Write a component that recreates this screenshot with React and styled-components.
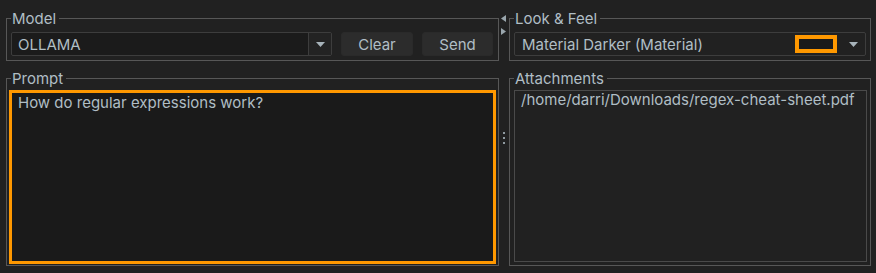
import React from 'react';
import styled, { createGlobalStyle } from 'styled-components';

const Global = createGlobalStyle`
  html, body { margin: 0; padding: 0; background: #212121; }
  body {
    font-family: Inter, "Noto Sans", sans-serif;
    font-size: 15px;
    color: #b0bec5;
  }
  * { box-sizing: border-box; }
`;

const Page = styled.div`
  width: 876px;
  height: 273px;
  padding: 10px 6px 7px 6px;
  display: flex;
`;

const Pane = styled.div`
  width: ${(p) => p.$w}px;
  flex: none;
  display: flex;
  flex-direction: column;
  gap: 9px;
`;

const Group = styled.fieldset`
  margin: 0;
  min-width: 0;
  border: 1px solid #575757;
  padding: ${(p) => p.$pad};
  display: flex;
  flex-direction: ${(p) => (p.$column ? 'column' : 'row')};
  align-items: stretch;
  gap: 9px;
  flex: ${(p) => (p.$grow ? '1 1 auto' : 'none')};
`;

const Legend = styled.legend`
  padding: 0 3px 0 1px;
  margin-left: ${(p) => p.$offset || 0}px;
  line-height: 17px;
  color: #b0bec5;
`;

const Combo = styled.div`
  height: 24px;
  flex: 1 1 auto;
  display: flex;
  align-items: center;
  border: 1px solid #3d3d3d;
  border-radius: 2px;
  background: ${(p) => (p.$editable ? '#1b1b1b' : '#212121')};
  overflow: hidden;
`;

const ComboText = styled.div`
  flex: 1 1 auto;
  padding-left: ${(p) => p.$pad}px;
  white-space: nowrap;
`;

const ArrowBox = styled.div`
  width: 23px;
  align-self: stretch;
  display: flex;
  align-items: center;
  justify-content: center;
  background: ${(p) => (p.$sep ? '#232323' : 'transparent')};
  border-left: ${(p) => (p.$sep ? '1px solid #3d3d3d' : 'none')};
`;

const Caret = () => (
  <svg width="9" height="5" viewBox="0 0 9 5">
    <path d="M0 0 H9 L4.5 5 Z" fill="#a7b3ba" />
  </svg>
);

const Button = styled.button`
  width: ${(p) => p.$w}px;
  height: 24px;
  flex: none;
  font: inherit;
  color: #b0bec5;
  background: #2c2c2c;
  border: 1px solid #2a2a2a;
  border-radius: 3px;
  padding: 0;
`;

const Swatch = styled.span`
  width: 42px;
  height: 18px;
  flex: none;
  border: 4px solid #ff9800;
  background: #1a1a1a;
  margin-right: 5px;
`;

const TextArea = styled.textarea`
  flex: 1 1 auto;
  width: 100%;
  resize: none;
  outline: none;
  border: 3px solid #ff9800;
  background: #1a1a1a;
  color: #b0bec5;
  font: inherit;
  line-height: 18px;
  padding: 1px 6px;
  margin: 0;
`;

const List = styled.div`
  flex: 1 1 auto;
  border: 1px solid #4a4a4a;
  padding: 0 6px;
  line-height: 18px;
  white-space: nowrap;
`;

const Divider = styled.div`
  width: 10px;
  flex: none;
  display: flex;
  flex-direction: column;
  align-items: center;
  padding-top: 5px;
`;

const ArrowStack = styled.div`
  display: flex;
  flex-direction: column;
  gap: 6px;
  margin-left: -1px;
`;

const Grip = styled.div`
  flex: 1 1 auto;
  display: flex;
  flex-direction: column;
  justify-content: center;
  gap: 3px;
  padding-bottom: 25px;
`;

const Dot = styled.span`
  width: 2px;
  height: 2px;
  background: #8f9aa0;
`;

export default function App() {
  return (
    <>
      <Global />
      <Page>
        <Pane $w={493}>
          <Group $pad="5px 5px 4px 4px">
            <Legend>Model</Legend>
            <Combo $editable>
              <ComboText $pad={6}>OLLAMA</ComboText>
              <ArrowBox $sep>
                <Caret />
              </ArrowBox>
            </Combo>
            <Button $w={72}>Clear</Button>
            <Button $w={71}>Send</Button>
          </Group>
          <Group $pad="3px 2px 1px 2px" $grow $column>
            <Legend $offset={2}>Prompt</Legend>
            <TextArea defaultValue="How do regular expressions work?" />
          </Group>
        </Pane>
        <Divider>
          <ArrowStack>
            <svg width="5" height="7" viewBox="0 0 5 7">
              <path d="M5 0 V7 L0 3.5 Z" fill="#9aa6ad" />
            </svg>
            <svg width="5" height="7" viewBox="0 0 5 7">
              <path d="M0 0 V7 L5 3.5 Z" fill="#9aa6ad" />
            </svg>
          </ArrowStack>
          <Grip>
            <Dot />
            <Dot />
            <Dot />
          </Grip>
        </Divider>
        <Pane $w={362}>
          <Group $pad="5px 4px 4px 4px">
            <Legend>Look &amp; Feel</Legend>
            <Combo>
              <ComboText $pad={7}>Material Darker (Material)</ComboText>
              <Swatch />
              <ArrowBox>
                <Caret />
              </ArrowBox>
            </Combo>
          </Group>
          <Group $pad="3px 3px 3px 4px" $grow $column>
            <Legend>Attachments</Legend>
            <List>/home/darri/Downloads/regex-cheat-sheet.pdf</List>
          </Group>
        </Pane>
      </Page>
    </>
  );
}
